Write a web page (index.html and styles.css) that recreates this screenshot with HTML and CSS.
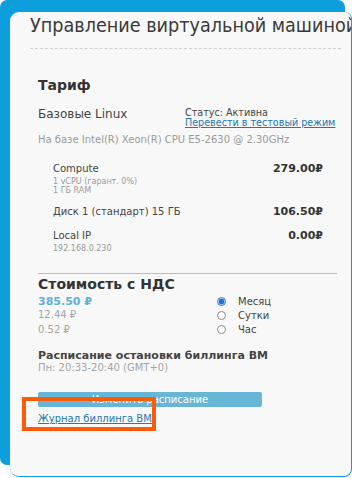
FILE: index.html
```html
<!DOCTYPE html>
<html lang="ru">
<head>
<meta charset="utf-8">
<title>Управление виртуальной машиной</title>
<link rel="stylesheet" href="styles.css">
</head>
<body>
<div class="frame">
  <div class="panel">
    <h1 class="title">Управление виртуальной машиной</h1>
    <div class="content">
      <h2 class="heading tariff">Тариф</h2>
      <div class="plan-row">
        <div class="plan-name">Базовые Linux</div>
        <div class="plan-status">
          <div class="status">Статус: Активна</div>
          <a class="link" href="#">Перевести в тестовый режим</a>
        </div>
      </div>
      <div class="cpu">На базе Intel(R) Xeon(R) CPU E5-2630 @ 2.30GHz</div>
      <div class="items">
        <div class="item">
          <div class="item-info">
            <div class="item-name">Compute</div>
            <div class="item-sub first">1 vCPU (гарант. 0%)</div>
            <div class="item-sub">1 ГБ RAM</div>
          </div>
          <div class="item-price">279.00₽</div>
        </div>
        <div class="item disk">
          <div class="item-info">
            <div class="item-name">Диск 1 (стандарт) 15 ГБ</div>
          </div>
          <div class="item-price">106.50₽</div>
        </div>
        <div class="item ip">
          <div class="item-info">
            <div class="item-name">Local IP</div>
            <div class="item-sub first">192.168.0.230</div>
          </div>
          <div class="item-price">0.00₽</div>
        </div>
      </div>
      <div class="cost">
        <h2 class="heading">Стоимость с НДС</h2>
        <div class="cost-grid">
          <div class="cost-values">
            <div class="cost-main">385.50 ₽</div>
            <div class="cost-alt">12.44 ₽</div>
            <div class="cost-alt last">0.52 ₽</div>
          </div>
          <div class="periods">
            <div class="period"><span class="radio checked"></span><span class="period-label">Месяц</span></div>
            <div class="period"><span class="radio"></span><span class="period-label">Сутки</span></div>
            <div class="period"><span class="radio"></span><span class="period-label">Час</span></div>
          </div>
        </div>
      </div>
      <div class="schedule">
        <div class="schedule-title">Расписание остановки биллинга ВМ</div>
        <div class="schedule-time">Пн: 20:33-20:40 (GMT+0)</div>
        <button class="btn" type="button">Изменить расписание</button>
        <a class="link journal" href="#">Журнал биллинга ВМ</a>
      </div>
    </div>
  </div>
</div>
<div class="highlight"></div>
</body>
</html>
```

FILE: styles.css
```css
html, body {
  margin: 0;
  padding: 0;
  overflow: hidden;
  background: #ffffff;
}

body {
  width: 352px;
  height: 478px;
  position: relative;
  font-family: "DejaVu Sans", Verdana, sans-serif;
  color: #444444;
}

.frame {
  width: 345px;
  height: 465px;
  box-sizing: border-box;
  padding: 12px 0 0 10px;
  background: #0d9fdc;
  border-radius: 7px;
}

.panel {
  width: 342px;
  height: 465px;
  box-sizing: border-box;
  background: #f8f8f8;
  border: 1px solid #0d9fdc;
  border-left: none;
  border-top: none;
  border-radius: 9px 7px 8px 9px;
  padding: 0 14px 0 20px;
  overflow: hidden;
}

.title {
  margin: 0 -4px 0 0;
  padding: 2px 0 10px 0;
  font-family: "DejaVu Sans Condensed", "DejaVu Sans", Verdana, sans-serif;
  font-stretch: condensed;
  font-size: 19.6px;
  line-height: 24px;
  font-weight: normal;
  color: #3a3a3a;
  white-space: nowrap;
  border-bottom: 1px dashed #cfcfcf;
}

.content {
  margin-left: 8px;
}

.heading {
  margin: 0;
  font-size: 14px;
  line-height: 18px;
  font-weight: bold;
  color: #333333;
}

.tariff {
  margin-top: 27px;
}

.plan-row {
  display: grid;
  grid-template-columns: 147px 1fr;
  margin-top: 12px;
}

.plan-name {
  font-size: 12px;
  line-height: 16px;
  color: #444444;
}

.plan-status {
  padding-top: 2px;
  font-size: 9.6px;
  line-height: 10px;
  white-space: nowrap;
}

.status {
  color: #444444;
}

.link {
  color: #2477b3;
  text-decoration: underline;
  font-size: 9.6px;
}

.cpu {
  margin-top: 5px;
  font-size: 10px;
  line-height: 13px;
  color: #9a9a9a;
  white-space: nowrap;
}

.items {
  padding: 0 14px 0 15px;
  margin-top: 16px;
}

.item {
  display: flex;
  justify-content: space-between;
  align-items: flex-start;
}

.item.disk {
  margin-top: 10px;
}

.item.ip {
  margin-top: 11px;
}

.item-name {
  font-size: 10px;
  line-height: 13px;
  color: #444444;
}

.item-sub {
  font-size: 8px;
  line-height: 9px;
  color: #9a9a9a;
}

.item-sub.first {
  margin-top: 2px;
}

.item-price {
  font-size: 11px;
  line-height: 13px;
  font-weight: bold;
  color: #333333;
}

.cost {
  margin-top: 20px;
  border-top: 1px solid #8fc9e4;
  padding-top: 1px;
}

.cost-grid {
  display: grid;
  grid-template-columns: 179px 1fr;
  margin-top: 2px;
}

.cost-main {
  font-size: 11px;
  line-height: 13px;
  font-weight: bold;
  color: #5ab2da;
}

.cost-alt {
  font-size: 10px;
  line-height: 13px;
  color: #a5a5a5;
}

.cost-alt.last {
  margin-top: 2px;
}

.periods {
  display: flex;
  flex-direction: column;
}

.period {
  display: flex;
  align-items: center;
  height: 14px;
}

.radio {
  width: 9px;
  height: 9px;
  box-sizing: border-box;
  border: 1px solid #8a8a8a;
  border-radius: 50%;
  background: #ffffff;
  margin-right: 12px;
  margin-top: -1px;
}

.radio.checked {
  border-color: #2a78d8;
  background: radial-gradient(circle, #1f6fd8 0 2.6px, #d6e6f8 3.2px);
}

.period-label {
  font-size: 10px;
  line-height: 14px;
  color: #444444;
}

.schedule {
  margin-top: 13px;
}

.schedule-title {
  font-size: 11px;
  line-height: 12px;
  font-weight: bold;
  color: #444444;
}

.schedule-time {
  font-size: 10px;
  line-height: 12px;
  color: #a5a5a5;
}

.btn {
  display: block;
  width: 224px;
  height: 15px;
  margin-top: 18px;
  padding: 0;
  border: none;
  border-radius: 2px;
  background: #68b6d6;
  color: #ffffff;
  font-family: "DejaVu Sans", Verdana, sans-serif;
  font-size: 10px;
  line-height: 15px;
  text-align: center;
}

.journal {
  display: inline-block;
  margin-top: 1px;
  line-height: 12px;
  font-size: 10px;
}

.highlight {
  position: absolute;
  left: 22px;
  top: 397px;
  width: 134px;
  height: 34px;
  box-sizing: border-box;
  border: 4px solid #ff5a0a;
}
```
